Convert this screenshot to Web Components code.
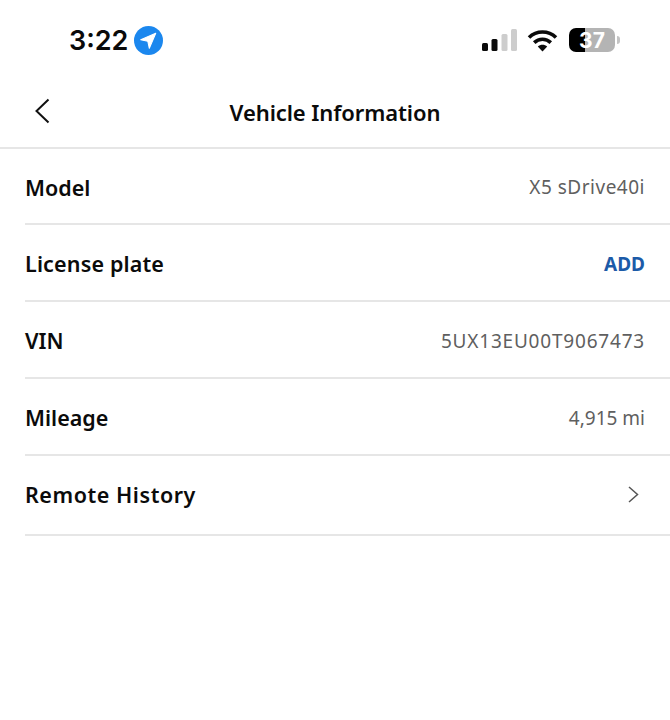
<!DOCTYPE html>
<html lang="en">
<head>
<meta charset="utf-8">
<title>Vehicle Information</title>
<style>
  html, body { margin: 0; background: #fff; }
  body { font-family: "Noto Sans", "Liberation Sans", sans-serif; }
</style>
</head>
<body>
<status-bar time="3:22" battery="37"></status-bar>
<nav-header>Vehicle Information</nav-header>
<info-list>
  <info-row label="Model" style="--row-height: 76px; --label-spacing: 0; --value-spacing: 0.5px">X5 sDrive40i</info-row>
  <info-row label="License plate" style="--label-spacing: 0.15px" action>ADD</info-row>
  <info-row label="VIN" style="--label-spacing: 0; --value-spacing: 0.8px">5UX13EU00T9067473</info-row>
  <info-row label="Mileage" style="--label-spacing: 0; --value-spacing: 0">4,915 mi</info-row>
  <info-row label="Remote History" style="--label-spacing: 0.55px" chevron></info-row>
</info-list>

<script>
class StatusBar extends HTMLElement {
  constructor() {
    super();
    this.attachShadow({ mode: "open" });
  }

  connectedCallback() {
    const time = this.getAttribute("time") || "";
    const battery = this.getAttribute("battery") || "";
    this.shadowRoot.innerHTML = `
      <style>
        :host {
          display: flex;
          align-items: center;
          height: 80px;
          padding: 0 50px 0 69px;
          box-sizing: border-box;
          font-family: "Inter", "Liberation Sans", sans-serif;
          color: #0a0a0a;
        }
        .time {
          font-size: 27px;
          font-weight: 600;
          line-height: 1;
        }
        .loc { width: 29px; height: 29px; margin-left: 6px; flex-shrink: 0; }
        .right { margin-left: auto; display: flex; align-items: center; }
        .signal { width: 36px; height: 24px; }
        .wifi { width: 31px; height: 24px; margin-left: 10px; }
        .battery {
          display: flex;
          align-items: center;
          justify-content: center;
          width: 46px;
          height: 24px;
          margin-left: 11px;
          border-radius: 7px;
          overflow: hidden;
          background: linear-gradient(90deg, #000 0 16px, #b4b4b4 16px);
          color: #fff;
          font-size: 21px;
          font-weight: 700;
          line-height: 1;
        }
        .nub { width: 3px; height: 8px; margin-left: 2px; background: #c4c4c4; border-radius: 0 3px 3px 0; }
      </style>
      <span class="time">${time}</span>
      <svg class="loc" viewBox="0 0 28 28">
        <circle cx="14" cy="14" r="14" fill="#1b87ee"/>
        <path d="M21 7 6.5 13.2l6.8 1.5L14.8 21.5z" fill="#fff" stroke="#fff" stroke-width="1" stroke-linejoin="round"/>
      </svg>
      <div class="right">
        <svg class="signal" viewBox="0 0 36 24">
          <rect x="1" y="15" width="6" height="8" rx="1.5" fill="#0a0a0a"/>
          <rect x="10.5" y="11" width="6" height="12" rx="1.5" fill="#0a0a0a"/>
          <rect x="20.5" y="6" width="6" height="17" rx="1.5" fill="#cdcdcd"/>
          <rect x="30" y="1" width="6" height="22" rx="1.5" fill="#cdcdcd"/>
        </svg>
        <svg class="wifi" viewBox="0 0 31 24" fill="none" stroke="#0a0a0a" stroke-width="3.6">
          <path d="M2 9.5C9.6 2.2 21.4 2.2 29 9.5"/>
          <path d="M7.2 14.6c4.7-4.4 11.9-4.4 16.6 0"/>
          <path d="M15.5 23.4 10.8 18.6c2.6-2.4 6.8-2.4 9.4 0z" fill="#0a0a0a" stroke="none"/>
        </svg>
        <div class="battery">${battery}</div>
        <div class="nub"></div>
      </div>
    `;
  }
}

class NavHeader extends HTMLElement {
  constructor() {
    super();
    this.attachShadow({ mode: "open" }).innerHTML = `
      <style>
        :host {
          position: relative;
          display: flex;
          align-items: center;
          justify-content: center;
          height: 69px;
          box-sizing: border-box;
          padding-bottom: 4px;
          border-bottom: 2px solid #e6e6e6;
          color: #0b0b0b;
          font-size: 22px;
          font-weight: 600;
          letter-spacing: -0.1px;
        }
        .back {
          position: absolute;
          left: 34px;
          top: 18px;
          width: 16px;
          height: 26px;
        }
      </style>
      <svg class="back" viewBox="0 0 16 26" fill="none" stroke="#111" stroke-width="2">
        <path d="M14.5 1.5 2.5 13l12 11.5"/>
      </svg>
      <slot></slot>
    `;
  }
}

class InfoList extends HTMLElement {
  constructor() {
    super();
    this.attachShadow({ mode: "open" }).innerHTML = `
      <style>
        :host { display: block; padding-left: 25px; }
      </style>
      <slot></slot>
    `;
  }
}

class InfoRow extends HTMLElement {
  constructor() {
    super();
    this.attachShadow({ mode: "open" });
  }

  connectedCallback() {
    const label = this.getAttribute("label") || "";
    const chevron = this.hasAttribute("chevron")
      ? `<svg class="chevron" viewBox="0 0 11 17" fill="none" stroke="#555" stroke-width="1.5"><path d="M1 1l8.5 7.5L1 16"/></svg>`
      : "";
    this.shadowRoot.innerHTML = `
      <style>
        :host {
          display: flex;
          align-items: center;
          justify-content: space-between;
          height: var(--row-height, 77px);
          box-sizing: border-box;
          padding: 2px 25px 0 0;
          border-bottom: 2px solid #e6e6e6;
        }
        :host([chevron]) { height: 80px; padding: 0 31px 2px 0; }
        .label { font-size: 21.5px; font-weight: 600; color: #0b0b0b; letter-spacing: var(--label-spacing, 0); }
        .value { font-size: 19px; color: #5f5f5f; letter-spacing: var(--value-spacing, 0); }
        :host([action]) .value { font-weight: 700; color: #1c5ba8; }
        .chevron { width: 11px; height: 17px; }
      </style>
      <span class="label">${label}</span>
      <span class="value"><slot></slot></span>
      ${chevron}
    `;
  }
}

customElements.define("status-bar", StatusBar);
customElements.define("nav-header", NavHeader);
customElements.define("info-list", InfoList);
customElements.define("info-row", InfoRow);
</script>
</body>
</html>
